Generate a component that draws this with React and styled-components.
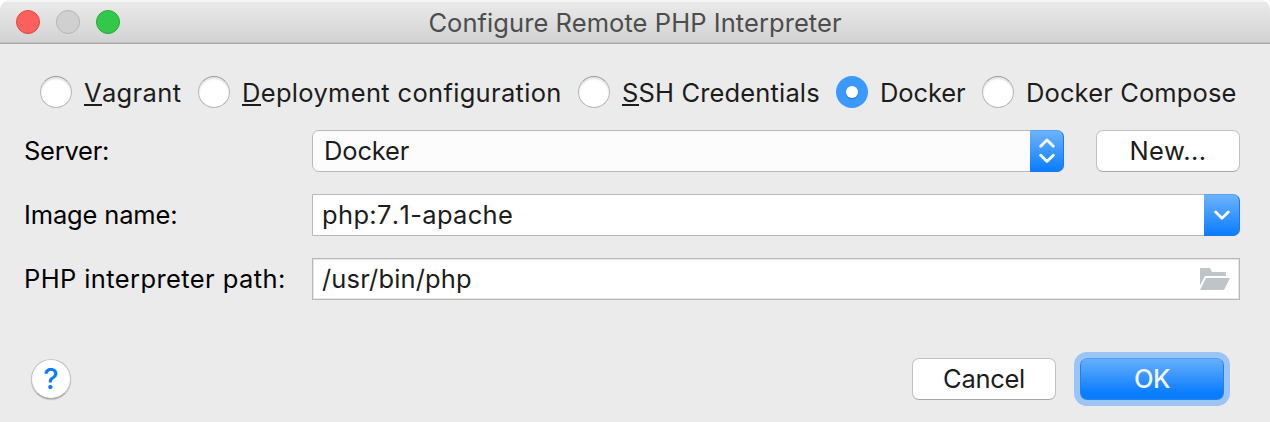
import React from "react";
import styled, { createGlobalStyle, css } from "styled-components";

const GlobalStyle = createGlobalStyle`
  * { box-sizing: border-box; }
  html, body { margin: 0; padding: 0; background: #fff; }
  body {
    font-family: Inter, "Liberation Sans", sans-serif;
    font-size: 25.5px;
    line-height: 32px;
    color: #1c1c1c;
  }
`;

const Window = styled.div`
  width: 1270px;
  height: 422px;
  background: #ebebeb;
  border-radius: 10px 10px 0 0;
  overflow: hidden;
  display: flex;
  flex-direction: column;
`;

const TitleBar = styled.header`
  height: 44px;
  flex: none;
  display: grid;
  grid-template-columns: 1fr auto 1fr;
  align-items: center;
  padding: 0 16px 1px;
  background: linear-gradient(#ebebeb, #d2d2d2);
  border-bottom: 1px solid #a9a9a9;
  box-shadow: inset 0 2px 0 #f5f5f5, inset 0 -1px 0 #c2c2c2;
`;

const Lights = styled.div`
  display: flex;
  gap: 16px;
  padding-top: 2px;
`;

const Light = styled.span`
  width: 24px;
  height: 24px;
  border-radius: 50%;
  background: ${(p) => p.$fill};
  border: 1px solid ${(p) => p.$edge};
`;

const Text = styled.span`
  white-space: nowrap;
  letter-spacing: ${(p) => p.$track || 0}px;
  font-kerning: ${(p) => (p.$unkerned ? "none" : "auto")};
`;

const Title = styled(Text)`
  color: #4d4d4d;
  padding-top: 3px;
`;

const Body = styled.main`
  flex: 1;
  display: flex;
  flex-direction: column;
  padding: 32px 30px 16px 24px;
`;

const RadioRow = styled.div`
  display: grid;
  grid-template-columns: 158px 380px 258px 146px 260px;
  height: 32px;
  padding-left: 16px;
`;

const RadioOption = styled.label`
  display: flex;
  align-items: flex-start;
  gap: 12px;
`;

const RadioText = styled(Text)`
  padding-top: 1px;
`;

const RadioDot = styled.span`
  flex: none;
  width: 32px;
  height: 32px;
  border-radius: 50%;
  display: flex;
  align-items: center;
  justify-content: center;
  ${(p) =>
    p.$checked
      ? css`
          background: #3b99fc;
          &::after {
            content: "";
            width: 12px;
            height: 12px;
            border-radius: 50%;
            background: #fff;
            box-shadow: 0 1px 1px rgba(0, 60, 140, 0.4);
          }
        `
      : css`
          background: #fff;
          border: 1px solid #b9b9b9;
          border-top-color: #999;
          box-shadow: inset 0 2px 2px rgba(0, 0, 0, 0.12);
        `}
`;

const Mnemonic = styled.span`
  display: inline-block;
  height: 29px;
  border-bottom: 2px solid #1c1c1c;
`;

const Form = styled.div`
  display: grid;
  grid-template-columns: 288px 928px;
  row-gap: 22px;
  margin-top: 22px;
`;

const FieldLabel = styled(Text)`
  line-height: 42px;
  color: #000;
`;

const ServerControls = styled.div`
  display: flex;
  gap: 32px;
`;

const Field = styled.div`
  height: 42px;
  flex: 1;
  display: flex;
  align-items: stretch;
  justify-content: space-between;
  line-height: 40px;
  background: ${(p) => (p.$select ? "#fcfcfc" : "#fff")};
  border: 1px solid #b9b9b9;
  border-radius: ${(p) => (p.$select ? "7px" : p.$combo ? "0 7px 7px 0" : "0")};
  box-shadow: ${(p) => (p.$select || p.$combo ? "none" : "inset 0 0 0 1px #e6e6e6")};
  padding-left: ${(p) => (p.$select ? 11 : 9)}px;
`;

const Stepper = styled.span`
  width: ${(p) => p.$width}px;
  margin: -1px -1px -1px 0;
  display: flex;
  align-items: center;
  justify-content: center;
  background: linear-gradient(#6db3fa, #0a7dff);
  border: 1px solid #1a76f5;
  border-top-color: #55a4f7;
  border-left: 0;
  border-radius: 0 7px 7px 0;
`;

const FolderSlot = styled.span`
  display: flex;
  align-items: center;
  padding-right: 9px;
`;

const Button = styled.button`
  width: 144px;
  height: 42px;
  padding: 0;
  font: inherit;
  line-height: 40px;
  border-radius: 7px;
  color: ${(p) => (p.$primary ? "#f2f4f8" : "#1c1c1c")};
  ${(p) =>
    p.$primary
      ? css`
          font-weight: 500;
          background: linear-gradient(#67b0fa, #0a7dff 85%);
          border: 1px solid #1f7ff2;
          border-top-color: #4b9df5;
          box-shadow: 0 0 0 6px #9bc5f4;
        `
      : css`
          background: #fff;
          border: 1px solid #c2c2c2;
          border-bottom-color: #a9a9a9;
        `}
`;

const Footer = styled.footer`
  margin-top: auto;
  margin-bottom: 6px;
  padding: 0 16px 0 7px;
  display: flex;
  align-items: center;
  gap: 24px;
`;

const HelpButton = styled.button`
  width: 40px;
  height: 40px;
  padding: 0;
  margin-right: auto;
  border-radius: 50%;
  background: #fff;
  border: 1px solid #c4c4c4;
  border-bottom-color: #aaa;
  box-shadow: 0 1px 1px rgba(0, 0, 0, 0.2);
  color: #087dff;
  font: inherit;
  font-size: 29px;
  font-weight: 500;
  line-height: 38px;
`;

const radios = [
  { key: "V", rest: "agrant", track: 0.35 },
  { key: "D", rest: "eployment configuration", track: 0.32 },
  { key: "S", rest: "SH Credentials", track: 0.15 },
  { key: "", rest: "Docker", track: -0.1, checked: true },
  { key: "", rest: "Docker Compose", track: 0.12 },
];

const UpDownIcon = () => (
  <svg width="16" height="26" viewBox="0 0 16 26" fill="none" stroke="#fff" strokeWidth="2.8" strokeLinecap="round" strokeLinejoin="round">
    <path d="M1.7 8.3 8 2l6.3 6.3M1.7 17.3 8 23.6l6.3-6.3" />
  </svg>
);

const DownIcon = () => (
  <svg width="16" height="10" viewBox="0 0 16 10" fill="none" stroke="#fff" strokeWidth="2.8" strokeLinecap="round" strokeLinejoin="round">
    <path d="M1.7 1.9 8 8.2l6.3-6.3" />
  </svg>
);

const FolderIcon = () => (
  <svg width="30" height="22" viewBox="0 0 30 22" fill="#bfc4c9">
    <path d="M0 0h10l2 4h14v4H5L0 17.5Z" />
    <path d="M6 10h24l-6 12H0Z" />
  </svg>
);

export default function App() {
  return (
    <>
      <GlobalStyle />
      <Window>
        <TitleBar>
          <Lights>
            <Light $fill="#fc605c" $edge="#e2443f" />
            <Light $fill="#d0d0d0" $edge="#b4b4b4" />
            <Light $fill="#34c84a" $edge="#24a936" />
          </Lights>
          <Title $track={0.07}>Configure Remote PHP Interpreter</Title>
        </TitleBar>
        <Body>
          <RadioRow>
            {radios.map((r) => (
              <RadioOption key={r.key + r.rest}>
                <RadioDot $checked={r.checked} />
                <RadioText $track={r.track}>
                  {r.key && <Mnemonic>{r.key}</Mnemonic>}
                  {r.rest}
                </RadioText>
              </RadioOption>
            ))}
          </RadioRow>
          <Form>
            <FieldLabel $track={-0.25}>Server:</FieldLabel>
            <ServerControls>
              <Field $select>
                <Text $track={-0.15}>Docker</Text>
                <Stepper $width={34}><UpDownIcon /></Stepper>
              </Field>
              <Button><Text $track={0.4}>New...</Text></Button>
            </ServerControls>
            <FieldLabel $track={-0.15}>Image name:</FieldLabel>
            <Field $combo>
              <Text $unkerned $track={0.35}>php:7.1-apache</Text>
              <Stepper $width={36}><DownIcon /></Stepper>
            </Field>
            <FieldLabel $track={0.4}>PHP interpreter path:</FieldLabel>
            <Field>
              <Text $track={0.15}>/usr/bin/php</Text>
              <FolderSlot><FolderIcon /></FolderSlot>
            </Field>
          </Form>
          <Footer>
            <HelpButton aria-label="Help">?</HelpButton>
            <Button><Text $track={-0.3}>Cancel</Text></Button>
            <Button $primary><Text $track={-0.5}>OK</Text></Button>
          </Footer>
        </Body>
      </Window>
    </>
  );
}
